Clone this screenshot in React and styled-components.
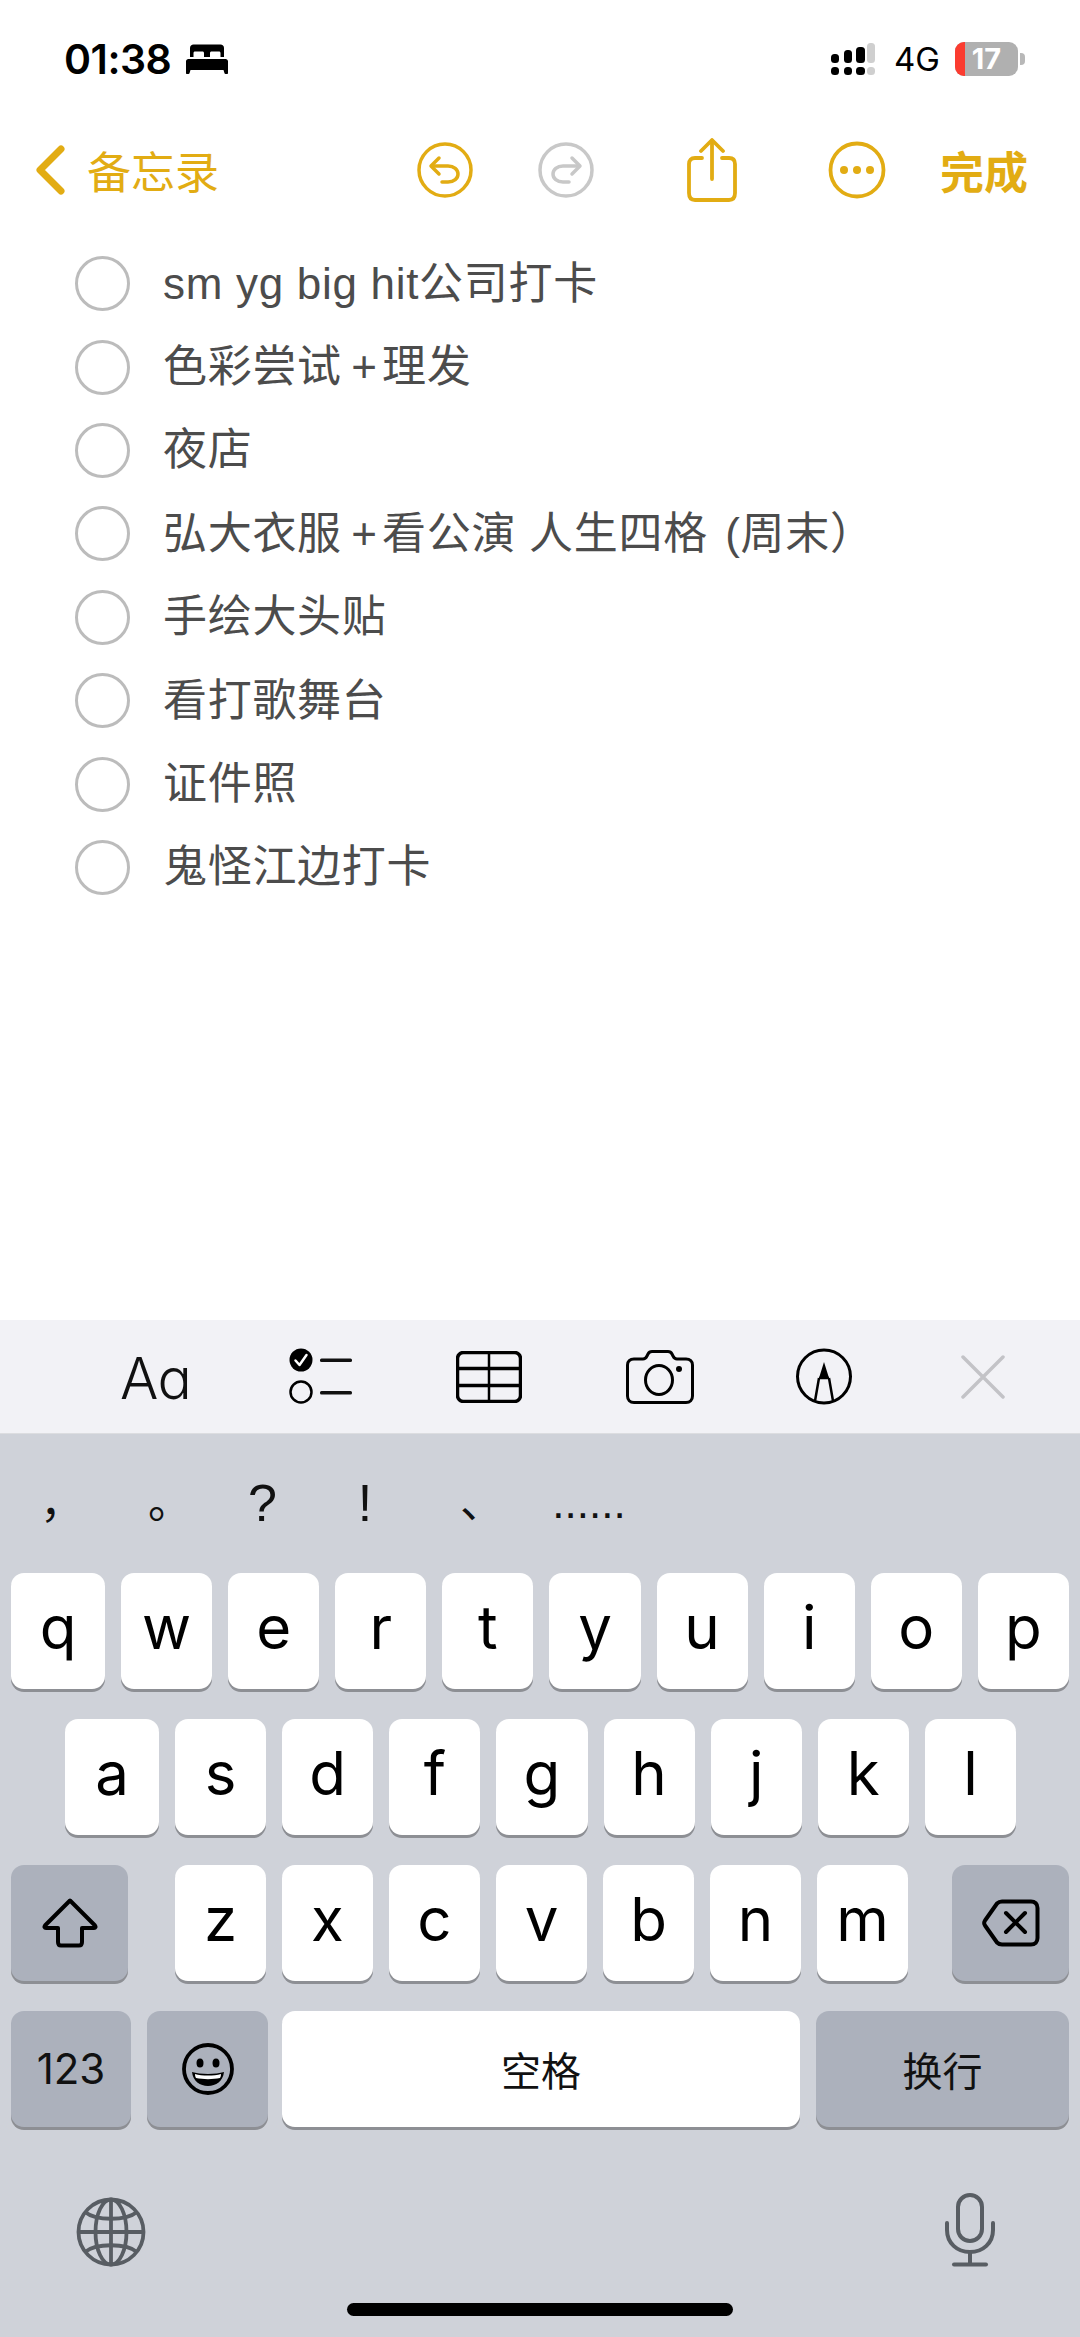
import React from 'react';
import styled, { createGlobalStyle } from 'styled-components';

const GOLD = '#e2ac13';
const CJK = `"Noto Sans CJK SC", sans-serif`;

const GlobalStyle = createGlobalStyle`
  html, body {
    margin: 0;
    padding: 0;
    background: #fff;
  }
  * {
    box-sizing: border-box;
  }
`;

const Page = styled.div`
  width: 1080px;
  height: 2337px;
  display: flex;
  flex-direction: column;
  overflow: hidden;
  background: #fff;
  font-family: Inter, ${CJK};
`;

const StatusBar = styled.div`
  height: 133px;
  flex-shrink: 0;
  padding: 42px 55px 0 64px;
  display: flex;
  align-items: flex-start;
`;

const Time = styled.span`
  font-size: 41px;
  font-weight: 600;
  line-height: 34px;
  color: #000;
  letter-spacing: -0.5px;
`;

const BedIcon = styled.svg`
  width: 42px;
  height: 30px;
  margin: 2px 0 0 15px;
`;

const StatusRight = styled.div`
  margin-left: auto;
  display: flex;
  align-items: center;
  height: 34px;
`;

const NetworkLabel = styled.span`
  font-size: 33px;
  line-height: 34px;
  margin: 0 15px 0 19px;
  color: #000;
`;

const Battery = styled.div`
  position: relative;
  width: 63px;
  height: 34px;
  border-radius: 9px;
  overflow: hidden;
  background: #b0b0b0;
  color: #fff;
  font-size: 29px;
  font-weight: 700;
  line-height: 34px;
  text-align: center;
`;

const BatteryFill = styled.div`
  position: absolute;
  left: 0;
  top: 0;
  bottom: 0;
  background: #fb3c30;
`;

const BatteryValue = styled.span`
  position: relative;
`;

const BatteryNub = styled.div`
  width: 5px;
  height: 12px;
  margin-left: 2px;
  border-radius: 0 4px 4px 0;
  background: #b8b8b8;
`;

const NavBar = styled.div`
  height: 73px;
  display: flex;
  align-items: center;
  padding-left: 35px;
  flex-shrink: 0;
`;

const BackText = styled.span`
  font-size: 44px;
  line-height: 60px;
  color: ${GOLD};
  margin-left: 22px;
  font-family: ${CJK};
`;

const NavIcon = styled.svg`
  flex-shrink: 0;
  margin-left: ${(p) => p.$gap}px;
`;

const DoneText = styled.span`
  font-size: 44px;
  line-height: 60px;
  font-weight: 700;
  color: ${GOLD};
  margin-left: 54px;
  font-family: ${CJK};
`;

const CheckList = styled.ul`
  flex: 1;
  list-style: none;
  margin: 0;
  padding: 36px 0 0 75px;
`;

const CheckItem = styled.li`
  height: 83.4px;
  display: flex;
  align-items: center;
`;

const CheckCircle = styled.span`
  width: 55px;
  height: 55px;
  border-radius: 50%;
  border: 3px solid #bcbcbc;
  flex-shrink: 0;
`;

const CheckText = styled.span`
  margin-left: 33px;
  font-family: "Liberation Sans", ${CJK};
  font-size: 44px;
  letter-spacing: 0.7px;
  line-height: 56px;
  color: #4c4c4c;
  white-space: pre;
`;

const Toolbar = styled.div`
  height: 114px;
  flex-shrink: 0;
  background: #f2f2f6;
  border-bottom: 1px solid #dcdde0;
  display: flex;
  align-items: center;
  padding-left: 120px;
`;

const FormatLabel = styled.span`
  width: 67px;
  font-family: Inter, sans-serif;
  font-size: 57px;
  line-height: 60px;
  color: #111;
  letter-spacing: -1px;
  font-weight: 300;
  margin-top: 5px;
`;

const ToolIcon = styled.svg`
  flex-shrink: 0;
  margin-left: ${(p) => p.$gap}px;
`;

const Keyboard = styled.div`
  height: 903px;
  flex-shrink: 0;
  background: #cfd2d9;
  display: flex;
  flex-direction: column;
`;

const CandidateRow = styled.div`
  height: 139px;
  display: flex;
  flex-shrink: 0;
  padding-top: 34px;
`;

const Candidate = styled.span`
  width: ${(p) => p.$width}px;
  text-align: center;
  font-family: "Liberation Sans", "Noto Sans CJK SC", sans-serif;
  font-size: ${(p) => p.$size ?? 44}px;
  font-weight: 400;
  line-height: 70px;
  color: #111;
`;

const KeyRow = styled.div`
  height: 119px;
  margin-bottom: 27px;
  padding: 0 ${(p) => p.$right ?? 11}px 0 ${(p) => p.$left ?? 11}px;
  display: flex;
  gap: ${(p) => p.$gap ?? 16}px;
  flex-shrink: 0;
`;

const Key = styled.div`
  flex: ${(p) => (p.$width ? `0 0 ${p.$width}px` : '1 1 0')};
  margin-left: ${(p) => p.$before ?? 0}px;
  margin-right: ${(p) => p.$after ?? 0}px;
  border-radius: 13px;
  height: 116px;
  background: ${(p) => (p.$dark ? '#acb1bc' : '#fff')};
  box-shadow: 0 3px 0 #8d8f94;
  display: flex;
  align-items: center;
  justify-content: center;
  color: #000;
  font-size: 60px;
  font-weight: 400;
  line-height: 1;
  padding-bottom: ${(p) => p.$lift ?? 9}px;
`;

const SpecialLabel = styled.span`
  font-family: ${(p) => (p.$cjk ? CJK : 'Inter, sans-serif')};
  font-size: ${(p) => p.$size}px;
  font-weight: 400;
  color: #111;
`;

const BottomRow = styled.div`
  display: flex;
  justify-content: space-between;
  align-items: flex-end;
  padding: 36px 85px 0 76px;
  flex-shrink: 0;
`;

const HomeBar = styled.div`
  width: 386px;
  height: 13px;
  margin: 36px auto 0;
  border-radius: 7px;
  background: #000;
`;

const Bed = () => (
  <BedIcon viewBox="0 0 42 30">
    <path
      d="M4 13V4c0-2 1.5-3.500 3.500-3.500h27C36.500.5 38 2 38 4v9h-3.500V9c0-1-.6-1.600-1.600-1.600h-7.300c-1 0-1.600.6-1.600 1.600v4h-6V9c0-1-.6-1.600-1.600-1.600H9.100C8.100 7.400 7.500 8 7.500 9v4zM2.500 15h37c1.500 0 2.500 1 2.500 2.500V29c0 .6-.4 1-1 1h-1.500c-.5 0-.8-.3-1-.8L37.500 26h-33l-1 3.200c-.2.500-.5.800-1 .8H1c-.6 0-1-.4-1-1V17.500C0 16 1 15 2.500 15z"
      fill="#000"
    />
  </BedIcon>
);

const Signal = () => (
  <svg width="44" height="32" viewBox="0 0 44 32">
    <rect x="0" y="11" width="8" height="9" rx="3.500" fill="#000" />
    <rect x="13" y="7" width="8" height="13" rx="3.500" fill="#000" />
    <rect x="25" y="4" width="9" height="16" rx="3.500" fill="#000" />
    <rect x="36" y="0" width="8" height="20" rx="3.500" fill="#cfcfcf" />
    <rect x="0" y="24" width="8" height="8" rx="3.500" fill="#000" />
    <rect x="13" y="24" width="8" height="8" rx="3.500" fill="#000" />
    <rect x="25" y="24" width="9" height="8" rx="3.500" fill="#000" />
    <rect x="36" y="24" width="8" height="8" rx="3.500" fill="#cfcfcf" />
  </svg>
);

const Chevron = () => (
  <svg width="30" height="50" viewBox="0 0 30 50">
    <path d="M26 4 L5 25 L26 46" fill="none" stroke={GOLD} strokeWidth="7" strokeLinecap="round" strokeLinejoin="round" />
  </svg>
);

const UndoArrow = ({ color, gap, flip }) => (
  <NavIcon $gap={gap} width="56" height="58" viewBox="0 0 56 58">
    <circle cx="28" cy="29" r="26" fill="none" stroke={color} strokeWidth="3.500" />
    <g transform={flip ? 'translate(56 0) scale(-1 1)' : undefined} fill="none" stroke={color} strokeWidth="3.500" strokeLinecap="round" strokeLinejoin="round">
      <path d="M22 17 L14 25 L22 33" />
      <path d="M15 25 H31 C37 25 41 28.500 41 33 C41 37.500 37 41 31 41 H25" />
    </g>
  </NavIcon>
);

const Share = () => (
  <NavIcon $gap={93} width="50" height="64" viewBox="0 0 50 64">
    <g fill="none" stroke={GOLD} strokeWidth="3.800" strokeLinecap="round" strokeLinejoin="round">
      <path d="M15 20 H8 C4 20 2 22 2 26 V55 C2 60 4 62 8 62 H42 C46 62 48 60 48 55 V26 C48 22 46 20 42 20 H35" />
      <path d="M25 41 V3" />
      <path d="M14 13 L25 2 L36 13" />
    </g>
  </NavIcon>
);

const More = () => (
  <NavIcon $gap={91} width="58" height="58" viewBox="0 0 58 58">
    <circle cx="29" cy="29" r="26.500" fill="none" stroke={GOLD} strokeWidth="3.800" />
    <circle cx="16" cy="29" r="4" fill={GOLD} />
    <circle cx="29" cy="29" r="4" fill={GOLD} />
    <circle cx="42" cy="29" r="4" fill={GOLD} />
  </NavIcon>
);

const ChecklistIcon = () => (
  <ToolIcon $gap={102} width="63" height="57" viewBox="0 0 63 57">
    <circle cx="12" cy="12" r="11.500" fill="#000" />
    <path d="M6.500 12.500 L10.500 17 L17.500 7" fill="none" stroke="#fff" strokeWidth="2.500" strokeLinecap="round" strokeLinejoin="round" />
    <circle cx="12" cy="44" r="10.500" fill="none" stroke="#000" strokeWidth="2.500" />
    <rect x="31" y="10.500" width="32" height="3.500" rx="1.500" fill="#111" />
    <rect x="31" y="43" width="32" height="3.500" rx="1.500" fill="#111" />
  </ToolIcon>
);

const TableIcon = () => (
  <ToolIcon $gap={104} width="66" height="52" viewBox="0 0 66 52">
    <rect x="1.500" y="1.500" width="63" height="49" rx="6" fill="none" stroke="#000" strokeWidth="3.500" />
    <path d="M1.500 17.500 H64.500 M1.500 34.500 H64.500" fill="none" stroke="#000" strokeWidth="3.500" />
    <path d="M33 1.500 V50.500" fill="none" stroke="#000" strokeWidth="2.500" />
  </ToolIcon>
);

const CameraIcon = () => (
  <ToolIcon $gap={104} width="68" height="54" viewBox="0 0 68 54">
    <path
      d="M8 9 H17 C19 9 20 8 21 6 L22 4 C23 2 24 1.500 26 1.500 H42 C44 1.500 45 2 46 4 L47 6 C48 8 49 9 51 9 H60 C64 9 66.500 11.500 66.500 15 V46 C66.500 50 64 52.500 60 52.500 H8 C4 52.500 1.500 50 1.500 46 V15 C1.500 11.500 4 9 8 9 Z"
      fill="none"
      stroke="#000"
      strokeWidth="3"
    />
    <ellipse cx="33" cy="30" rx="13.500" ry="14.500" fill="none" stroke="#000" strokeWidth="3" />
    <circle cx="53" cy="19" r="3" fill="#000" />
  </ToolIcon>
);

const PenIcon = () => (
  <ToolIcon $gap={102} width="56" height="57" viewBox="0 0 56 57">
    <circle cx="28" cy="28.500" r="26.500" fill="none" stroke="#000" strokeWidth="3" />
    <path d="M28 14 L33 30 H23 Z" fill="#000" />
    <path d="M23 30 L19 53 M33 30 L37 53 M23 30 H33" fill="none" stroke="#000" strokeWidth="2.500" />
  </ToolIcon>
);

const CloseIcon = () => (
  <ToolIcon $gap={109} width="44" height="44" viewBox="0 0 44 44">
    <path d="M2 2 L42 42 M42 2 L2 42" fill="none" stroke="#c3c3c7" strokeWidth="3.500" strokeLinecap="round" />
  </ToolIcon>
);

const ShiftIcon = () => (
  <svg width="56" height="50" viewBox="0 0 56 50">
    <path
      d="M28 2.500 L53 27.500 C54 29 53.500 30 52 30 H40 V44 C40 46.500 38.500 47.500 37 47.500 H19 C17.500 47.500 16 46.500 16 44 V30 H4 C2.500 30 2 29 3 27.500 Z"
      fill="none"
      stroke="#000"
      strokeWidth="4"
      strokeLinejoin="round"
    />
  </svg>
);

const DeleteIcon = () => (
  <svg width="58" height="48" viewBox="0 0 58 48">
    <path
      d="M20 2.500 H49 C53 2.500 55.500 5 55.500 9 V39 C55.500 43 53 45.500 49 45.500 H20 C18 45.500 16.500 45 15 43.500 L3 26.500 C2 25 2 23 3 21.500 L15 4.500 C16.500 3 18 2.500 20 2.500 Z"
      fill="none"
      stroke="#000"
      strokeWidth="4"
      strokeLinejoin="round"
    />
    <path d="M24 14 L43 33 M43 14 L24 33" fill="none" stroke="#000" strokeWidth="4" strokeLinecap="round" />
  </svg>
);

const EmojiIcon = () => (
  <svg width="52" height="52" viewBox="0 0 52 52">
    <circle cx="26" cy="26" r="24" fill="none" stroke="#000" strokeWidth="3.800" />
    <ellipse cx="18" cy="20" rx="3.500" ry="4.500" fill="#000" />
    <ellipse cx="34" cy="20" rx="3.500" ry="4.500" fill="#000" />
    <path d="M10 29 C18 31.500 34 31.500 42 29 C41 38 34 43 26 43 C18 43 11 38 10 29 Z" fill="#000" />
    <path d="M13 31 C20 33 32 33 39 31 C39 33 38.500 34 38 35 C31 36.500 21 36.500 14 35 C13.500 34 13 33 13 31 Z" fill="#fff" />
  </svg>
);

const GlobeIcon = () => (
  <svg width="70" height="70" viewBox="0 0 70 70">
    <g fill="none" stroke="#585d63" strokeWidth="3.800">
      <circle cx="35" cy="35" r="32.500" />
      <ellipse cx="35" cy="35" rx="15.500" ry="32.500" />
      <path d="M35 2.500 V67.500 M2.500 35 H67.500" />
      <path d="M9 15 C20 24 50 24 61 15 M9 55 C20 46 50 46 61 55" />
    </g>
  </svg>
);

const MicIcon = () => (
  <svg width="50" height="74" viewBox="0 0 50 74">
    <g fill="none" stroke="#585d63" strokeWidth="4" strokeLinecap="round">
      <rect x="13" y="2" width="24" height="46" rx="12" />
      <path d="M2 30 V37 C2 50 12 59 25 59 C38 59 48 50 48 37 V30" />
      <path d="M25 59 V71" strokeLinecap="butt" />
      <path d="M9 71.500 H41" />
    </g>
  </svg>
);

const notes = [
  'sm yg big hit公司打卡',
  '色彩尝试\u2009+\u200a理发',
  '夜店',
  '弘大衣服\u2009+\u200a看公演 人生四格 \u200a(周末）',
  '手绘大头贴',
  '看打歌舞台',
  '证件照',
  '鬼怪江边打卡',
];

const candidates = [
  { text: '，', width: 124 },
  { text: '。', width: 92 },
  { text: '?', width: 93, size: 52 },
  { text: '!', width: 112, size: 52 },
  { text: '、', width: 122 },
  { text: '......', width: 92 },
];

const App = () => (
  <Page>
    <GlobalStyle />
    <StatusBar>
      <Time>01:38</Time>
      <Bed />
      <StatusRight>
        <Signal />
        <NetworkLabel>4G</NetworkLabel>
        <Battery>
          <BatteryFill style={{ width: '16%' }} />
          <BatteryValue>17</BatteryValue>
        </Battery>
        <BatteryNub />
      </StatusRight>
    </StatusBar>
    <NavBar>
      <Chevron />
      <BackText>备忘录</BackText>
      <UndoArrow color={GOLD} gap={198} />
      <UndoArrow color="#c8c8c8" gap={65} flip />
      <Share />
      <More />
      <DoneText>完成</DoneText>
    </NavBar>
    <CheckList>
      {notes.map((note) => (
        <CheckItem key={note}>
          <CheckCircle />
          <CheckText>{note}</CheckText>
        </CheckItem>
      ))}
    </CheckList>
    <Toolbar>
      <FormatLabel>Aɑ</FormatLabel>
      <ChecklistIcon />
      <TableIcon />
      <CameraIcon />
      <PenIcon />
      <CloseIcon />
    </Toolbar>
    <Keyboard>
      <CandidateRow>
        {candidates.map((c) => (
          <Candidate key={c.text} $width={c.width} $size={c.size}>{c.text}</Candidate>
        ))}
      </CandidateRow>
      <KeyRow>
        {'qwertyuiop'.split('').map((k) => <Key key={k} $width={k === 'q' ? 94 : undefined}>{k}</Key>)}
      </KeyRow>
      <KeyRow $left={65} $right={64}>
        {'asdfghjkl'.split('').map((k) => <Key key={k} $width={k === 'a' ? 94 : undefined}>{k}</Key>)}
      </KeyRow>
      <KeyRow>
        <Key $dark $width={117} $after={31} $lift={0}><ShiftIcon /></Key>
        {'zxcvbnm'.split('').map((k) => <Key key={k}>{k}</Key>)}
        <Key $dark $width={117} $before={28} $lift={0}><DeleteIcon /></Key>
      </KeyRow>
      <KeyRow>
        <Key $dark $width={120} $lift={0}><SpecialLabel $size={42}>123</SpecialLabel></Key>
        <Key $dark $width={121} $after={-2} $lift={0}><EmojiIcon /></Key>
        <Key $lift={0}><SpecialLabel $cjk $size={40}>空格</SpecialLabel></Key>
        <Key $dark $width={253} $lift={0}><SpecialLabel $cjk $size={40}>换行</SpecialLabel></Key>
      </KeyRow>
      <BottomRow>
        <GlobeIcon />
        <MicIcon />
      </BottomRow>
      <HomeBar />
    </Keyboard>
  </Page>
);

export default App;
